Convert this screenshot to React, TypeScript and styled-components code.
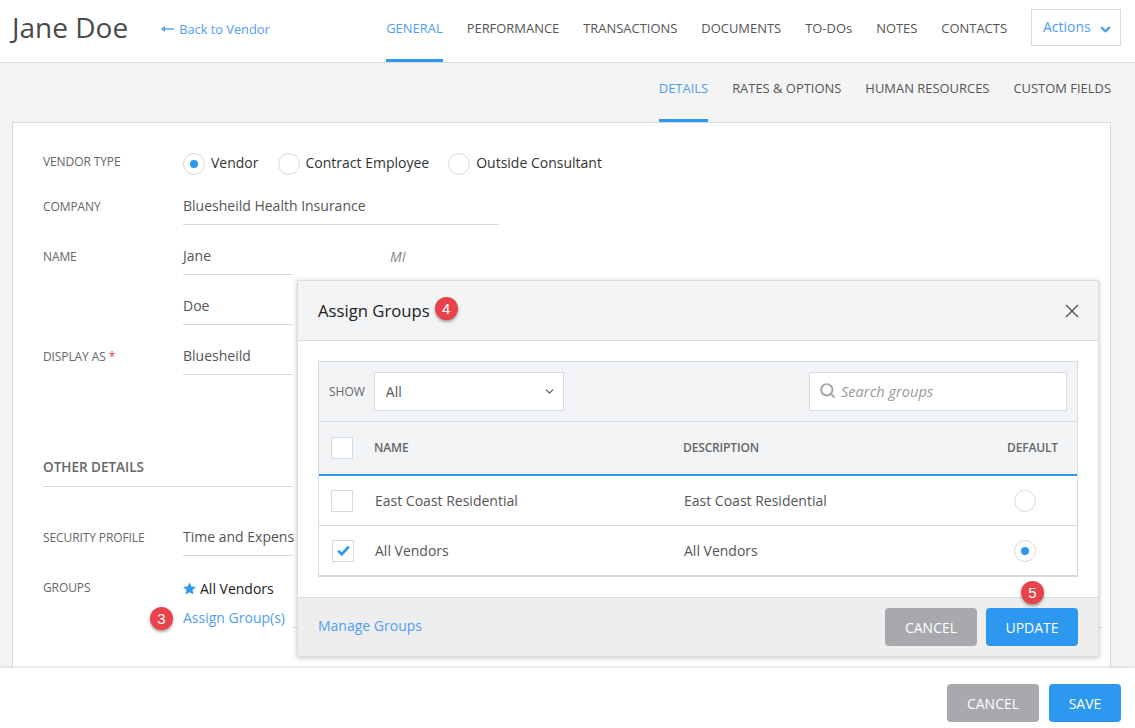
import React from "react"
import styled, { createGlobalStyle } from "styled-components"
import { ChevronDown, Search, X } from "lucide-react"

const GlobalStyle = createGlobalStyle`
  html, body {
    margin: 0;
    padding: 0;
    background: #fff;
  }
  * {
    box-sizing: border-box;
  }
  body {
    font-family: "Open Sans", "Liberation Sans", sans-serif;
    color: #555;
  }
`

const BLUE = "#2c98f0"
const LINE = "#d3dbe6"
const LINK = "#4f9ef2"

const Page = styled.div`
  position: relative;
  width: 1135px;
  height: 728px;
  overflow: hidden;
  display: flex;
  flex-direction: column;
  background: #f4f4f4;
`
const Header = styled.header`
  height: 63px;
  flex: none;
  display: flex;
  align-items: stretch;
  padding: 0 14px 0 12px;
  background: #fff;
  border-bottom: 1px solid ${LINE};
`
const Title = styled.h1`
  margin: 0;
  align-self: center;
  font-size: 28px;
  line-height: 52px;
  margin-bottom: 8px;
  font-weight: 400;
  color: #4a4a4a;
`
const BackLink = styled.a`
  display: flex;
  align-items: center;
  gap: 5px;
  margin-left: 33px;
  height: 58px;
  font-size: 12.8px;
  color: ${LINK};
`
const Tabs = styled.nav`
  display: flex;
  gap: 24px;
  margin-left: auto;
  align-items: stretch;
`
const Tab = styled.a<{ $active?: boolean; $height: number }>`
  display: flex;
  height: ${({ $height }) => $height}px;
  padding-bottom: ${({ $height }) => ($height === 59 ? 7 : 4)}px;
  align-items: center;
  font-size: 12.95px;
  white-space: nowrap;
  color: ${({ $active }) => ($active ? LINK : "#555")};
  border-bottom: 3px solid ${({ $active }) => ($active ? BLUE : "transparent")};
`
const ActionsButton = styled.button`
  align-self: flex-start;
  margin: 9px 0 0 24px;
  width: 90px;
  height: 37px;
  padding: 0 0 3px 11px;
  display: flex;
  align-items: center;
  gap: 7px;
  background: #fff;
  border: 1px solid ${LINE};
  font-family: inherit;
  font-size: 14px;
  color: ${LINK};
`
const ActionsChevron = styled(ChevronDown)`
  margin-top: 6px;
`
const SubNav = styled.div`
  height: 59px;
  flex: none;
  display: flex;
  justify-content: flex-end;
  padding-right: 24px;
`
const Main = styled.main`
  flex: 1;
  min-height: 0;
  padding: 0 24px 0 12px;
`
const Card = styled.section`
  height: 100%;
  padding: 30px 7px 0 30px;
  background: #fff;
  border: 1px solid ${LINE};
  border-bottom: 0;
`
const Row = styled.div<{ $height?: number }>`
  display: grid;
  grid-template-columns: 140px 1fr;
  align-items: end;
  height: ${({ $height }) => $height || 50}px;
`
const Label = styled.div`
  height: 36px;
  line-height: 36px;
  font-size: 12px;
  letter-spacing: -0.1px;
  white-space: nowrap;
  color: #666;
`
const TopLabel = styled(Label)`
  height: 22px;
  line-height: 18px;
  align-self: start;
`
const Required = styled.span`
  color: #e0393e;
`
const Value = styled.div<{ $width: number }>`
  width: ${({ $width }) => $width}px;
  height: 37px;
  line-height: 36px;
  font-size: 14px;
  white-space: nowrap;
  color: #555;
  border-bottom: 1px solid ${LINE};
`
const NameLine = styled.div`
  display: flex;
  align-items: center;
`
const MiddleInitial = styled.span`
  margin-left: 97px;
  font-size: 14px;
  font-style: italic;
  color: #888;
`
const RadioGroup = styled.div`
  display: flex;
  align-items: center;
  font-size: 14px;
  color: #333;
`
const RadioLabel = styled.span`
  margin: 0 19px 0 6px;
  position: relative;
  top: -2px;
`
const Radio = styled.span<{ $on?: boolean }>`
  display: inline-flex;
  align-items: center;
  justify-content: center;
  width: 22px;
  height: 22px;
  flex: none;
  border-radius: 50%;
  background: #fff;
  border: 1px solid ${LINE};
  &::after {
    content: "";
    width: 8px;
    height: 8px;
    border-radius: 50%;
    background: ${({ $on }) => ($on ? BLUE : "transparent")};
  }
`
const SectionTitle = styled.h2`
  width: 250px;
  height: 37px;
  margin: 75px 0 0;
  line-height: 34px;
  font-size: 13.5px;
  font-weight: 600;
  color: #666;
  border-bottom: 1px solid ${LINE};
`
const GroupRow = styled.div`
  display: grid;
  grid-template-columns: 140px 1fr;
  padding-top: 23px;
`
const GroupList = styled.div`
  display: flex;
  flex-direction: column;
  margin-top: -3px;
`
const GroupName = styled.div`
  display: flex;
  align-items: center;
  gap: 4px;
  height: 24px;
  font-size: 14px;
  color: #222;
`
const AssignRow = styled.div`
  position: relative;
  display: flex;
  align-items: flex-end;
  height: 26px;
  margin-top: 3px;
  &::after {
    content: "";
    flex: 1;
    height: 1px;
    margin: 0 0 1px 8px;
    background: ${LINE};
  }
`
const Link = styled.a`
  font-size: 14px;
  line-height: 24px;
  margin-bottom: -1px;
  color: ${LINK};
`
const Footer = styled.footer`
  position: relative;
  height: 60px;
  flex: none;
  display: flex;
  justify-content: flex-end;
  gap: 10px;
  padding: 16px 14px 0 0;
  background: #fff;
  box-shadow: 0 -1px 3px rgba(0, 0, 0, 0.12);
`
const Button = styled.button<{ $primary?: boolean; $width: number }>`
  width: ${({ $width }) => $width}px;
  height: 38px;
  padding: 0;
  border: 0;
  border-radius: 4px;
  font-family: inherit;
  font-size: 14px;
  color: #fff;
  background: ${({ $primary }) => ($primary ? BLUE : "#a7a9ac")};
`
const Modal = styled.div`
  position: absolute;
  left: 297px;
  top: 280px;
  width: 802px;
  border: 1px solid #dcdcdc;
  background: #fff;
  box-shadow: 0 1px 5px rgba(0, 0, 0, 0.22);
`
const ModalHeader = styled.div`
  height: 60px;
  display: flex;
  align-items: center;
  padding: 0 15px 0 20px;
  background: #f3f4f6;
  border-bottom: 1px solid #d8dadd;
`
const ModalTitle = styled.h3`
  margin: 0;
  font-size: 16.7px;
  font-weight: 400;
  color: #222;
`
const CloseButton = styled.span`
  display: flex;
  margin-left: auto;
  color: #555;
`
const ModalBody = styled.div`
  padding: 20px 20px 20px;
`
const Grid = styled.div`
  border: 1px solid ${LINE};
  border-bottom: 2px solid ${LINE};
`
const Toolbar = styled.div`
  height: 60px;
  display: flex;
  align-items: center;
  padding: 0 10px;
  background: #f3f4f6;
  border-bottom: 1px solid ${LINE};
`
const ShowLabel = styled.span`
  margin-right: 9px;
  font-size: 12px;
  color: #666;
`
const Select = styled.div`
  width: 190px;
  height: 39px;
  display: flex;
  align-items: center;
  justify-content: space-between;
  padding: 0 7px 0 11px;
  background: #fff;
  border: 1px solid ${LINE};
  font-size: 14px;
  color: #555;
`
const SearchBox = styled.div`
  width: 258px;
  height: 39px;
  margin-left: auto;
  display: flex;
  align-items: center;
  gap: 5px;
  padding: 0 9px 2px;
  background: #fff;
  border: 1px solid ${LINE};
  font-size: 14.6px;
  font-style: italic;
  color: #999;
`
const GridRow = styled.div<{ $head?: boolean; $last?: boolean }>`
  display: grid;
  grid-template-columns: 43px 309px 317px 1fr;
  align-items: center;
  padding-left: 12px;
  height: ${({ $head, $last }) => ($head ? 54 : $last ? 49 : 50)}px;
  background: ${({ $head }) => ($head ? "#f3f4f6" : "#fff")};
  border-bottom: ${({ $head, $last }) =>
    $head ? `2px solid ${BLUE}` : $last ? "0" : `1px solid ${LINE}`};
`
const HeadCell = styled.div<{ $inset?: number }>`
  margin-top: -1px;
  padding-left: ${({ $inset }) => $inset || 0}px;
  font-size: 12px;
  font-weight: 600;
  color: #666;
  letter-spacing: -0.15px;
`
const Cell = styled.div<{ $inset?: number }>`
  display: flex;
  padding-left: ${({ $inset }) => $inset || 1}px;
  font-size: 14px;
  color: #555;
`
const Checkbox = styled.span<{ $on?: boolean }>`
  display: flex;
  align-items: center;
  justify-content: center;
  width: 22px;
  height: 22px;
  margin-left: ${({ $on }) => ($on ? 1 : 0)}px;
  background: #fff;
  border: 1px solid ${LINE};
`
const ModalFooter = styled.div`
  height: 59px;
  display: flex;
  align-items: center;
  gap: 9px;
  padding: 0 20px;
  background: #eee;
  border-top: 1px solid #d8dadd;
`
const ManageLink = styled(Link)`
  margin: 0 auto 2px 0;
`
const Badge = styled.span`
  display: inline-flex;
  align-items: center;
  justify-content: center;
  width: 23px;
  height: 23px;
  flex: none;
  border-radius: 50%;
  background: #e8434a;
  color: #fff;
  font-family: "Liberation Sans", Arial, sans-serif;
  font-size: 15px;
  box-shadow: 0 2px 3px rgba(0, 0, 0, 0.35);
`
const TitleBadge = styled(Badge)`
  margin: -4px 0 0 5px;
`
const AssignBadge = styled(Badge)`
  position: absolute;
  left: -33px;
  top: 4px;
`
const UpdateBadge = styled(Badge)`
  position: absolute;
  right: 34px;
  top: -27px;
`
const UpdateWrap = styled.div`
  position: relative;
  display: flex;
`

const ArrowIcon = () => (
  <svg width="13" height="8" viewBox="0 0 13 8" fill="none">
    <path d="M13 4H2" stroke={LINK} strokeWidth="1.4" />
    <path d="M0 4l4-3v6z" fill={LINK} />
  </svg>
)
const StarIcon = () => (
  <svg width="13" height="13" viewBox="0 0 24 24" fill={BLUE}>
    <path d="M12 0.8l3.5 7.5 8.2 1-6.1 5.6 1.7 8.2L12 19l-7.3 4.1 1.7-8.2L.3 9.3l8.2-1z" />
  </svg>
)
const CheckIcon = () => (
  <svg width="13" height="11" viewBox="0 0 13 11" fill="none">
    <path d="M1.2 5.8l3.6 3.4L11.8 1.6" stroke={BLUE} strokeWidth="2.8" />
  </svg>
)

const mainTabs = ["PERFORMANCE", "TRANSACTIONS", "DOCUMENTS", "TO-DOs", "NOTES", "CONTACTS"]
const subTabs = ["RATES & OPTIONS", "HUMAN RESOURCES", "CUSTOM FIELDS"]

export default function App() {
  return (
    <Page>
      <GlobalStyle />
      <Header>
        <Title>Jane Doe</Title>
        <BackLink><ArrowIcon />Back to Vendor</BackLink>
        <Tabs>
          <Tab $active $height={62}>GENERAL</Tab>
          {mainTabs.map(t => <Tab key={t} $height={62}>{t}</Tab>)}
        </Tabs>
        <ActionsButton>
          Actions
          <ActionsChevron size={15} strokeWidth={3.4} />
        </ActionsButton>
      </Header>
      <SubNav>
        <Tabs>
          <Tab $active $height={59}>DETAILS</Tab>
          {subTabs.map(t => <Tab key={t} $height={59}>{t}</Tab>)}
        </Tabs>
      </SubNav>
      <Main>
        <Card>
          <Row $height={22}>
            <TopLabel>VENDOR TYPE</TopLabel>
            <RadioGroup>
              <Radio $on /><RadioLabel>Vendor</RadioLabel>
              <Radio /><RadioLabel>Contract Employee</RadioLabel>
              <Radio /><RadioLabel>Outside Consultant</RadioLabel>
            </RadioGroup>
          </Row>
          <Row>
            <Label>COMPANY</Label>
            <Value $width={316}>Bluesheild Health Insurance</Value>
          </Row>
          <Row>
            <Label>NAME</Label>
            <NameLine>
              <Value $width={110}>Jane</Value>
              <MiddleInitial>MI</MiddleInitial>
            </NameLine>
          </Row>
          <Row>
            <span />
            <Value $width={110}>Doe</Value>
          </Row>
          <Row>
            <Label>DISPLAY AS <Required>*</Required></Label>
            <Value $width={110}>Bluesheild</Value>
          </Row>
          <SectionTitle>OTHER DETAILS</SectionTitle>
          <Row $height={69}>
            <Label>SECURITY PROFILE</Label>
            <Value $width={110}>Time and Expens</Value>
          </Row>
          <GroupRow>
            <TopLabel>GROUPS</TopLabel>
            <GroupList>
              <GroupName><StarIcon />All Vendors</GroupName>
              <AssignRow>
                <AssignBadge>3</AssignBadge>
                <Link>Assign Group(s)</Link>
              </AssignRow>
            </GroupList>
          </GroupRow>
        </Card>
      </Main>
      <Footer>
        <Button $width={92}>CANCEL</Button>
        <Button $width={72} $primary>SAVE</Button>
      </Footer>
      <Modal>
        <ModalHeader>
          <ModalTitle>Assign Groups</ModalTitle>
          <TitleBadge>4</TitleBadge>
          <CloseButton><X size={22} strokeWidth={1.5} /></CloseButton>
        </ModalHeader>
        <ModalBody>
          <Grid>
            <Toolbar>
              <ShowLabel>SHOW</ShowLabel>
              <Select>All<ChevronDown size={13} /></Select>
              <SearchBox>
                <Search size={17} strokeWidth={2.8} color="#a3a6aa" />
                Search groups
              </SearchBox>
            </Toolbar>
            <GridRow $head>
              <Checkbox />
              <HeadCell>NAME</HeadCell>
              <HeadCell>DESCRIPTION</HeadCell>
              <HeadCell $inset={7}>DEFAULT</HeadCell>
            </GridRow>
            <GridRow>
              <Checkbox />
              <Cell>East Coast Residential</Cell>
              <Cell>East Coast Residential</Cell>
              <Cell $inset={14}><Radio /></Cell>
            </GridRow>
            <GridRow $last>
              <Checkbox $on><CheckIcon /></Checkbox>
              <Cell>All Vendors</Cell>
              <Cell>All Vendors</Cell>
              <Cell $inset={14}><Radio $on /></Cell>
            </GridRow>
          </Grid>
        </ModalBody>
        <ModalFooter>
          <ManageLink>Manage Groups</ManageLink>
          <Button $width={92}>CANCEL</Button>
          <UpdateWrap>
            <UpdateBadge>5</UpdateBadge>
            <Button $width={92} $primary>UPDATE</Button>
          </UpdateWrap>
        </ModalFooter>
      </Modal>
    </Page>
  )
}
